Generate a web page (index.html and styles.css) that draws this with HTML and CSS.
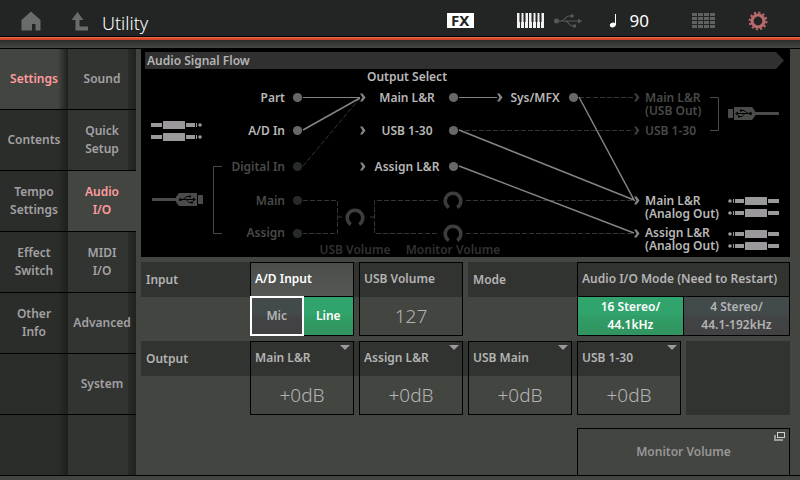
FILE: index.html
```
<!DOCTYPE html>
<html lang="en">
<head>
    <meta charset="UTF-8">
    <meta name="viewport" content="width=device-width, initial-scale=1.0">
    <title>Utility</title>
    <link rel="stylesheet" href="styles.css">
</head>
<body>

    <!-- Top bar -->
    <header class="topbar">
        <a href="#" class="icon home" aria-label="Home">
            <svg width="20" height="20" viewBox="0 0 20 20"><path d="M10 0.5 L19.5 9 V19.5 H14.5 V13 H11 V19.5 H0.5 V9 Z" fill="#6a6c6a"/></svg>
        </a>
        <a href="#" class="icon" aria-label="Exit">
            <svg width="18" height="20" viewBox="0 0 18 20"><path d="M6.5 1 L12.5 9 H8.5 V15.5 H17 V19.5 H4.500 V9 H0.5 Z" fill="#6a6c6a"/></svg>
        </a>
        <h1>Utility</h1>
        <div class="status">
            <button type="button" class="fx">FX</button>
            <svg class="keys" width="27" height="15" viewBox="0 0 27 15">
                <rect width="27" height="15" fill="#f0f0f0"/>
                <path d="M3.500 0 V15 M7.500 0 V15 M11.500 0 V15 M15.500 0 V15 M19.500 0 V15 M23.500 0 V15" stroke="#232524" stroke-width="1"/>
                <path d="M3.500 0 V9 M7.500 0 V9 M15.500 0 V9 M19.500 0 V9 M23.500 0 V9" stroke="#232524" stroke-width="2"/>
            </svg>
            <svg class="usb" width="28" height="14" viewBox="0 0 28 14">
                <g fill="none" stroke="#575957" stroke-width="1.200"><path d="M2 7 H25 M7 7 C11 7 11 2 15 2 H18 M11 7 C15 7 15 12 18 12 H20"/></g>
                <g fill="#575957"><circle cx="2.500" cy="7" r="2.500"/><circle cx="18" cy="2" r="1.800"/><rect x="19" y="10.500" width="3" height="3"/><path d="M24 4.500 L28 7 L24 9.500 Z"/></g>
            </svg>
            <svg class="note" width="8" height="15" viewBox="0 0 8 15"><ellipse cx="3.800" cy="12" rx="3" ry="2.300" transform="rotate(-15 3.800 12)" fill="#fff"/><path d="M6.500 1 V12" stroke="#fff" stroke-width="1"/></svg>
            <span class="tempo">90</span>
            <svg class="pads" width="23" height="15" viewBox="0 0 23 15">
                <path d="M0 1.500 H23 M0 5.500 H23 M0 9.500 H23 M0 13.500 H23" stroke="#60625f" stroke-width="3" stroke-dasharray="5 1"/>
            </svg>
            <button type="button" class="icon" aria-label="Settings menu">
                <svg width="20" height="20" viewBox="0 0 20 20"><circle cx="10" cy="10" r="6" fill="none" stroke="#b96a6c" stroke-width="3.200"/><circle cx="10" cy="10" r="8.400" fill="none" stroke="#b96a6c" stroke-width="2" stroke-dasharray="2.200 2.198"/></svg>
            </button>
        </div>
    </header>

    <div class="layout">
        <!-- Side menus -->
        <nav class="tabs main-tabs">
            <a href="#" class="active">Settings</a>
            <a href="#">Contents</a>
            <a href="#">Tempo<br>Settings</a>
            <a href="#">Effect<br>Switch</a>
            <a href="#">Other<br>Info</a>
            <span></span>
            <span></span>
        </nav>
        <nav class="tabs sub-tabs">
            <a href="#">Sound</a>
            <a href="#">Quick<br>Setup</a>
            <a href="#" class="active">Audio<br>I/O</a>
            <a href="#">MIDI<br>I/O</a>
            <a href="#">Advanced</a>
            <a href="#">System</a>
            <span></span>
        </nav>

        <main>
            <!-- Signal flow -->
            <section class="flow">
                <h2>Audio Signal Flow</h2>
                <svg class="diagram" viewBox="141 69 649 188">
                    <defs>
                        <g id="jack">
                            <rect x="0" y="-2" width="11" height="4"/>
                            <rect x="12" y="-4" width="22" height="8" rx="0.500"/>
                            <rect x="35" y="-2" width="9" height="4"/>
                            <rect x="45" y="-2" width="1" height="4"/>
                            <circle cx="49" cy="0" r="1.800"/>
                        </g>
                        <g id="plug">
                            <rect x="0" y="-1.500" width="25" height="3" fill="#4a4c4a"/>
                            <path d="M27 -6.500 H45 V6.500 H27 L24 2.500 V-2.500 Z" fill="#4a4c4a"/>
                            <rect x="46" y="-4.500" width="5" height="9" fill="#4a4c4a"/>
                            <path d="M27 0 H43 M31 0 L35 -3 H38 M34 0 L37 3 H40" fill="none" stroke="#000"/>
                            <circle cx="28.500" cy="0" r="1.500" fill="#000"/>
                            <path d="M41 -2 L44 0 L41 2 Z" fill="#000"/>
                            <rect x="37" y="-4" width="2" height="2" fill="#000"/>
                            <rect x="39" y="2" width="2" height="2" fill="#000"/>
                        </g>
                        <path id="arrow" d="M0 -4 H2.500 L5.500 0 L2.500 4 H0 L2.500 0 Z"/>
                        <path id="knob" d="M-4.200 7.500 A7.800 7.800 0 1 1 4.200 7.500"/>
                    </defs>

                    <!-- inactive routes -->
                    <g class="route-off">
                        <path d="M303 166 L360 98"/>
                        <path d="M579 97.500 H634"/>
                        <path d="M465 130.500 H634"/>
                        <path d="M303 200.500 H337.500 V233.500 H303 M337.500 217 H342"/>
                        <path d="M370 217 H374.500 M438 200.500 H374.500 V233.500 H438"/>
                        <path d="M466 200.500 H634 M466 233.500 H634"/>
                    </g>
                    <g class="bracket">
                        <path d="M222 166.500 H213.500 V233.500 H222"/>
                        <path d="M710 97.500 H718.500 V130.500 H710"/>
                    </g>

                    <!-- active routes -->
                    <path class="route straight" d="M303 97.500 H360 M459 97.500 H497"/>
                    <g class="route">
                        <path d="M303 130 L360 98"/>
                        <path d="M579 97 L634 200 L459 130"/>
                        <path d="M459 166 L634 233"/>
                    </g>

                    <g class="dot">
                        <circle cx="297.500" cy="97.500" r="4.600"/>
                        <circle cx="297.500" cy="130.500" r="4.600"/>
                        <circle cx="453.500" cy="97.500" r="4.600"/>
                        <circle cx="453.500" cy="130.500" r="4.600"/>
                        <circle cx="453.500" cy="166.500" r="4.600"/>
                        <circle cx="573.500" cy="97.500" r="4.600"/>
                    </g>
                    <g class="dot-off">
                        <circle cx="297.500" cy="166.500" r="4.600"/>
                        <circle cx="297.500" cy="200.500" r="4.600"/>
                        <circle cx="297.500" cy="233.500" r="4.600"/>
                    </g>

                    <g class="arrows">
                        <use href="#arrow" x="360" y="97.500"/>
                        <use href="#arrow" x="360" y="130.500"/>
                        <use href="#arrow" x="360" y="166.500"/>
                        <use href="#arrow" x="497" y="97.500"/>
                        <use href="#arrow" x="634" y="200.500"/>
                        <use href="#arrow" x="634" y="233.500"/>
                    </g>
                    <g class="arrows-off">
                        <use href="#arrow" x="634" y="97.500"/>
                        <use href="#arrow" x="634" y="130.500"/>
                    </g>

                    <g class="knobs">
                        <use href="#knob" x="355" y="217"/>
                        <use href="#knob" x="453" y="200"/>
                        <use href="#knob" x="453" y="233"/>
                    </g>

                    <g fill="#9c999c">
                        <use href="#jack" transform="translate(151 125)"/>
                        <use href="#jack" transform="translate(151 137)"/>
                        <use href="#jack" transform="translate(779 201) scale(-1 1)"/>
                        <use href="#jack" transform="translate(779 213) scale(-1 1)"/>
                        <use href="#jack" transform="translate(779 234) scale(-1 1)"/>
                        <use href="#jack" transform="translate(779 246) scale(-1 1)"/>
                    </g>
                    <use href="#plug" transform="translate(152 199.500)"/>
                    <use href="#plug" transform="translate(779 113.500) scale(-1 1)"/>

                    <g class="name end">
                        <text x="285" y="102">Part</text>
                        <text x="285" y="135">A/D In</text>
                        <text x="285" y="171" class="off">Digital In</text>
                        <text x="285" y="205" class="off">Main</text>
                        <text x="285" y="237" class="off">Assign</text>
                    </g>
                    <g class="name mid">
                        <text x="407" y="81">Output Select</text>
                        <text x="407" y="102">Main L&amp;R</text>
                        <text x="407" y="135">USB 1-30</text>
                        <text x="407" y="171">Assign L&amp;R</text>
                        <text x="535" y="102">Sys/MFX</text>
                        <text x="355" y="254" class="faint">USB Volume</text>
                        <text x="453" y="254" class="faint">Monitor Volume</text>
                    </g>
                    <g class="name">
                        <text x="645" y="102" class="off">Main L&amp;R <tspan x="645" dy="13">(USB Out)</tspan></text>
                        <text x="645" y="135" class="off">USB 1-30</text>
                        <text x="645" y="205">Main L&amp;R <tspan x="645" dy="13">(Analog Out)</tspan></text>
                        <text x="645" y="237">Assign L&amp;R <tspan x="645" dy="13">(Analog Out)</tspan></text>
                    </g>
                </svg>
            </section>

            <!-- Parameters -->
            <form class="params">
                <h3 class="band band-input">Input</h3>
                <h3 class="band band-mode">Mode</h3>
                <h3 class="band band-output">Output</h3>

                <fieldset class="box ad-input">
                    <legend>A/D Input</legend>
                    <div class="switch">
                        <label class="cursor"><input type="radio" name="ad"><span>Mic</span></label>
                        <label><input type="radio" name="ad" checked><span>Line</span></label>
                    </div>
                </fieldset>
                <div class="box usb-volume">
                    <label for="usb-volume">USB Volume</label>
                    <input type="text" id="usb-volume" value="127">
                </div>
                <fieldset class="box io-mode">
                    <legend>Audio I/O Mode (Need to Restart)</legend>
                    <div class="switch">
                        <label><input type="radio" name="mode" checked><span>16 Stereo/<br>44.1kHz</span></label>
                        <label><input type="radio" name="mode"><span>4 Stereo/<br>44.1-192kHz</span></label>
                    </div>
                </fieldset>

                <div class="box out-main">
                    <label for="out-main" class="drop">Main L&amp;R</label>
                    <select id="out-main"><option>+0dB</option></select>
                </div>
                <div class="box out-assign">
                    <label for="out-assign" class="drop">Assign L&amp;R</label>
                    <select id="out-assign"><option>+0dB</option></select>
                </div>
                <div class="box out-usb-main">
                    <label for="out-usb-main" class="drop">USB Main</label>
                    <select id="out-usb-main"><option>+0dB</option></select>
                </div>
                <div class="box out-usb">
                    <label for="out-usb" class="drop">USB 1-30</label>
                    <select id="out-usb"><option>+0dB</option></select>
                </div>
                <div class="blank"></div>

                <button type="button" class="monitor">
                    Monitor Volume
                    <svg width="12" height="10" viewBox="0 0 12 10"><path d="M0 3 H2 V7 H9 V9 H0 Z" fill="#9c9c9c"/><rect x="3.500" y="0.500" width="7" height="5" fill="none" stroke="#d0d0d0"/></svg>
                </button>
            </form>
        </main>
    </div>

</body>
</html>
```
FILE: styles.css
```
* { box-sizing: border-box; }
body {
    margin: 0;
    min-height: 100vh;
    background-color: #434541;
    color: #b4b4b4;
    font-family: "Noto Sans", "Open Sans", sans-serif;
    font-size: 12px;
    font-weight: 600;
    line-height: 18px;
}
h1, h2, h3 { margin: 0; }
a { color: inherit; text-decoration: none; }
button, input, select { font: inherit; color: inherit; margin: 0; padding: 0; border: none; background: none; }
button { cursor: pointer; }

/* Top bar */
.topbar {
    display: flex;
    align-items: center;
    height: 49px;
    padding: 0 32px 8px 21px;
    background: linear-gradient(#232524 36px, #000 36px, #000 37px, #f08a70 37px, #e04a28 38px, #c8442a 40px, #2a2e29 40px, #434741 48px, #000 48px);
}
.icon { display: flex; }
.home { margin-right: 30px; }
.topbar h1 {
    margin-left: 13px;
    padding-top: 5px;
    color: #fff;
    font-size: 18px;
    font-weight: 300;
}
.status { display: flex; align-items: center; margin-left: auto; }
.fx {
    width: 27px;
    height: 15px;
    margin-right: 43px;
    background-color: #fff;
    color: #232524;
    font-size: 15px;
    font-weight: 700;
    line-height: 15px;
}
.keys { margin-right: 10px; }
.usb { margin-right: 27px; }
.note { margin-right: 13px; }
.tempo { margin-right: 43px; color: #fff; font-size: 17px; font-weight: 400; }
.pads { margin-right: 33px; }

/* Side menus */
.layout { display: flex; border-bottom: 1px solid #000; }
.tabs { flex: none; width: 68px; display: flex; flex-direction: column; }
.tabs > * {
    display: flex;
    flex: 1;
    align-items: center;
    justify-content: center;
    min-height: 60px;
    border-bottom: 1px solid #000;
    text-align: center;
    color: #a3a1a3;
}
.tabs > :last-child { border-bottom: none; }
.main-tabs > * { background: linear-gradient(to right, transparent 58px, #1d1f1d 68px) #2b2d2a; }
.sub-tabs > * { background: linear-gradient(to right, transparent 60px, #282c29 60px, #202220 68px) #323432; }
.main-tabs .active { background-color: #434541; color: #ff9c9f; }
.sub-tabs .active { background: #434541; color: #ff9c9f; }

main { flex: 1; padding: 0 10px 0 5px; }

/* Signal flow */
.flow { padding-top: 3px; background-color: #000; }
.flow h2 {
    height: 17px;
    margin: 0 6px 0 4px;
    padding-left: 2px;
    background-color: #303030;
    clip-path: polygon(0 0, calc(100% - 8px) 0, 100% 50%, calc(100% - 8px) 100%, 0 100%);
    font-size: 12px;
    font-weight: 600;
    line-height: 17px;
}
.diagram { display: block; width: 100%; }
.name { fill: #b8b8b8; }
.end { text-anchor: end; }
.mid { text-anchor: middle; }
.off { fill: #484a48; }
.faint { fill: #303230; }
.route { fill: none; stroke: #828582; stroke-width: 1.5; }
.straight { stroke-width: 1; }
.route-off { fill: none; stroke: #343634; stroke-dasharray: 5 2; }
.bracket { fill: none; stroke: #484a48; }
.dot { fill: #666866; }
.dot-off { fill: #262b27; }
.arrows { fill: #858585; }
.arrows-off { fill: #3c3e3c; }
.knobs { fill: none; stroke: #3c3e3c; stroke-width: 3.5; }

/* Parameters */
.params {
    display: grid;
    grid-template-columns: repeat(6, 1fr);
    grid-template-rows: 74px 74px auto;
    gap: 5px;
    padding-top: 5px;
}
.band {
    align-self: start;
    height: 35px;
    padding-left: 5px;
    background-color: #313330;
    font-size: 12px;
    font-weight: 600;
    line-height: 35px;
}
.band-input { grid-area: 1 / 1 / 2 / 4; }
.band-mode { grid-area: 1 / 4 / 2 / 7; }
.band-output { grid-area: 2 / 1 / 3 / 6; }
.ad-input { grid-area: 1 / 2; }
.usb-volume { grid-area: 1 / 3; }
.io-mode { grid-area: 1 / 5 / 2 / 7; }
.out-main { grid-area: 2 / 2; }
.out-assign { grid-area: 2 / 3; }
.out-usb-main { grid-area: 2 / 4; }
.out-usb { grid-area: 2 / 5; }
.blank { grid-area: 2 / 6; background-color: #313330; }

.box {
    display: flex;
    flex-direction: column;
    min-width: 0;
    margin: 0;
    padding: 0;
    border: 1px solid #000;
}
.box legend, .box > label {
    position: relative;
    float: left;
    flex: none;
    width: 100%;
    height: 34px;
    padding: 0 4px;
    line-height: 32px;
    white-space: nowrap;
}
.box legend { border-bottom: 1px solid #000; }
.ad-input legend { background: linear-gradient(#4b4d4b, #565856); color: #fff; }
.box > input, .box > select {
    flex: 1;
    width: 100%;
    min-height: 0;
    appearance: none;
    color: #b4b4b4;
    font-size: 19px;
    font-weight: 300;
    text-align: center;
    text-align-last: center;
}
.drop::after {
    content: "";
    position: absolute;
    top: 3px;
    right: 3px;
    border: 5px solid transparent;
    border-top-color: #9c999c;
    border-bottom: none;
}
.switch { display: flex; width: 100%; height: 38px; }
.switch label { flex: 1; display: flex; text-align: center; }
.switch label + label { border-left: 1px solid #000; }
.switch input { position: absolute; opacity: 0; }
.switch span {
    flex: 1;
    display: flex;
    align-items: center;
    justify-content: center;
    background: linear-gradient(#424a4c 45%, #424445 50%, #424042);
}
.switch input:checked + span { background: linear-gradient(#30a46c 45%, #319e67 50%, #31935f); color: #fff; }
/* edit cursor */
.cursor { z-index: 1; margin: -1px 0 -1px -1px; border: 2px solid #fff; }
.switch .cursor + label { border-left: none; }

.monitor {
    position: relative;
    grid-column: 5 / 7;
    height: 47px;
    margin-top: 8px;
    border: 1px solid #000;
    border-bottom: none;
    color: #979797;
}
.monitor svg { position: absolute; top: 3px; right: 3px; }
```
